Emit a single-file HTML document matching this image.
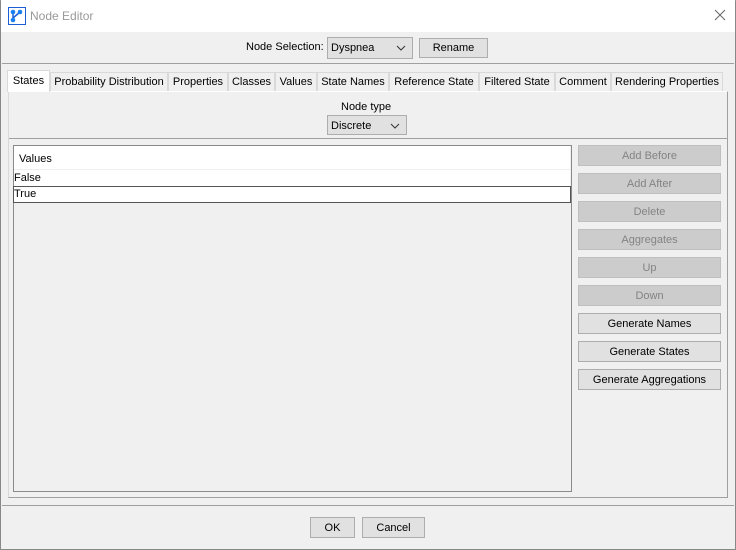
<!DOCTYPE html>
<html><head><style>
*{box-sizing:border-box;margin:0;padding:0}
body{width:736px;height:550px;background:#f0f0f0;font-family:"Liberation Sans",Arial,sans-serif;font-size:11px;color:#000;position:relative;overflow:hidden}
.a{position:absolute}
.btn{position:absolute;border:1px solid #adadad;background:#e1e1e1;text-align:center;line-height:20px;font-size:11px}
.dis{background:#cccccc;border-color:#bfbfbf;color:#838383}
.tab{position:absolute;top:72px;height:19px;border:1px solid #d9d9d9;border-bottom:none;background:#f0f0f0;line-height:19px;text-align:center;font-size:11px}
.chev{position:absolute;right:6px;top:7px}
</style></head><body>
<div class="a" style="left:0;top:0;width:736px;height:550px;border:1px solid #888;border-top:1px solid #aaa"></div>
<div class="a" style="left:1px;top:0;width:734px;height:32px;background:#fff"></div>
<svg class="a" style="left:8px;top:7px" width="18" height="18" viewBox="0 0 18 18"><rect x="0.5" y="0.5" width="17" height="17" fill="#fff" stroke="#1a5fd6"/><line x1="5" y1="5" x2="5" y2="13" stroke="#1a5fd6" stroke-width="1.5"/><line x1="5" y1="11" x2="12" y2="5" stroke="#1a5fd6" stroke-width="1.5"/><circle cx="5" cy="5" r="2.3" fill="#1a7ff0"/><circle cx="12" cy="5" r="2.3" fill="#1a7ff0"/><circle cx="5" cy="13" r="2.3" fill="#1a7ff0"/></svg>
<div class="a" style="left:30px;top:9px;font-size:12px;color:#999">Node Editor</div>
<svg class="a" style="left:714px;top:9px" width="12" height="12" viewBox="0 0 12 12"><path d="M1 1L11 11M11 1L1 11" stroke="#666" stroke-width="1"/></svg>
<div class="a" style="left:246px;top:41px">Node Selection:</div>
<div class="a" style="left:327px;top:37px;width:86px;height:22px;border:1px solid #adadad;background:#e1e1e1;padding:4px 3px">Dyspnea<svg class="chev" width="10" height="6" viewBox="0 0 10 6"><path d="M1 1L5 5L9 1" fill="none" stroke="#333"/></svg></div>
<div class="btn" style="left:419px;top:38px;width:69px;height:20px;line-height:18px">Rename</div>
<div class="a" style="left:2px;top:63px;width:732px;height:1px;background:#a0a0a0"></div>
<div class="tab" style="left:7px;top:70px;height:22px;width:43px;background:#fff;z-index:2;line-height:20px">States</div>
<div class="tab" style="left:50px;width:118px">Probability Distribution</div>
<div class="tab" style="left:168px;width:60px">Properties</div>
<div class="tab" style="left:228px;width:47px">Classes</div>
<div class="tab" style="left:275px;width:42px">Values</div>
<div class="tab" style="left:317px;width:72px">State Names</div>
<div class="tab" style="left:389px;width:90px">Reference State</div>
<div class="tab" style="left:479px;width:76px">Filtered State</div>
<div class="tab" style="left:555px;width:56px">Comment</div>
<div class="tab" style="left:611px;width:112px">Rendering Properties</div>
<div class="a" style="left:8px;top:91px;width:720px;height:407px;border:1px solid #d9d9d9;border-top:1px solid #fff;border-right:1px solid #a0a0a0;border-bottom:1px solid #a0a0a0"></div>
<div class="a" style="left:341px;top:101px">Node type</div>
<div class="a" style="left:327px;top:115px;width:80px;height:20px;border:1px solid #adadad;background:#e1e1e1;padding:4px 3px">Discrete<svg class="chev" width="10" height="6" viewBox="0 0 10 6"><path d="M1 1L5 5L9 1" fill="none" stroke="#333"/></svg></div>
<div class="a" style="left:9px;top:138px;width:718px;height:1px;background:#a0a0a0"></div>
<div class="a" style="left:13px;top:145px;width:559px;height:347px;border:1px solid #8a8a8a"></div>
<div class="a" style="left:14px;top:146px;width:556px;height:24px;background:#fff;border-bottom:1px solid #eee;padding:7px 5px">Values</div>
<div class="a" style="left:14px;top:170px;width:556px;height:16px;background:#fff;padding:2px 0">False</div>
<div class="a" style="left:13px;top:186px;width:558px;height:17px;background:#fff;border:1px solid #555;padding:1px 0">True</div>
<div class="btn dis" style="left:578px;top:145px;width:143px;height:21px">Add Before</div>
<div class="btn dis" style="left:578px;top:173px;width:143px;height:21px">Add After</div>
<div class="btn dis" style="left:578px;top:201px;width:143px;height:21px">Delete</div>
<div class="btn dis" style="left:578px;top:229px;width:143px;height:21px">Aggregates</div>
<div class="btn dis" style="left:578px;top:257px;width:143px;height:21px">Up</div>
<div class="btn dis" style="left:578px;top:285px;width:143px;height:21px">Down</div>
<div class="btn" style="left:578px;top:313px;width:143px;height:21px">Generate Names</div>
<div class="btn" style="left:578px;top:341px;width:143px;height:21px">Generate States</div>
<div class="btn" style="left:578px;top:369px;width:143px;height:21px">Generate Aggregations</div>
<div class="a" style="left:2px;top:505px;width:732px;height:1px;background:#a0a0a0"></div>
<div class="btn" style="left:310px;top:517px;width:45px;height:21px">OK</div>
<div class="btn" style="left:362px;top:517px;width:63px;height:21px">Cancel</div>
</body></html>
